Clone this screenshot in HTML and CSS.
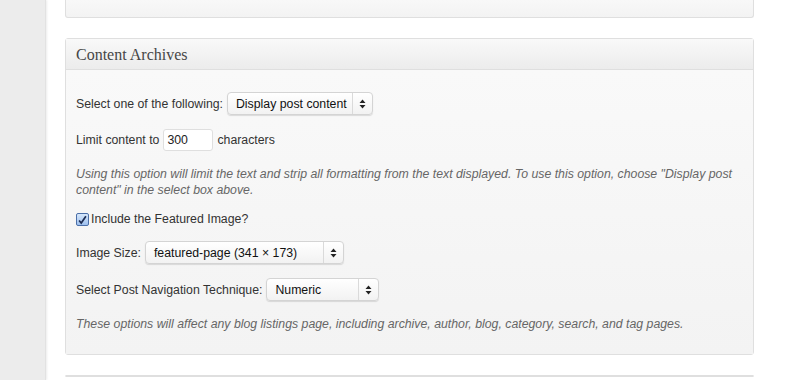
FILE: index.html
```html
<!DOCTYPE html>
<html lang="en">
  <head>
    <meta charset="UTF-8">
    <title>Theme Settings</title>
    <link rel="stylesheet" href="styles.css">
  </head>
  <body>
    <div class="sidebar"></div>
    <div class="main">
      <div class="postbox stub"></div>

      <div class="postbox">
        <h3 class="postbox-title">Content Archives</h3>
        <div class="inside">
          <div class="row">
            <label>Select one of the following:</label>
            <div class="select select-content">
              <span class="select-value">Display post content</span>
              <span class="select-arrows">
                <svg width="7" height="10" viewBox="0 0 7 10"><path d="M3.5 0.5 L6.5 4 L0.5 4 Z M3.5 9.5 L6.5 6 L0.5 6 Z" fill="#222"/></svg>
              </span>
            </div>
          </div>

          <div class="row">
            <label>Limit content to</label>
            <input class="text-input" type="text" value="300">
            <label>characters</label>
          </div>

          <p class="description">Using this option will limit the text and strip all formatting from the text displayed. To use this option, choose "Display post content" in the select box above.</p>

          <div class="row row-check">
            <span class="checkbox">
              <svg width="13" height="13" viewBox="0 0 13 13"><path d="M2.5 6.5 L5 9.5 L10.5 1.5" fill="none" stroke="#1d2c52" stroke-width="2"/></svg>
            </span>
            <label>Include the Featured Image?</label>
          </div>

          <div class="row">
            <label>Image Size:</label>
            <div class="select select-size">
              <span class="select-value">featured-page (341 × 173)</span>
              <span class="select-arrows">
                <svg width="7" height="10" viewBox="0 0 7 10"><path d="M3.5 0.5 L6.5 4 L0.5 4 Z M3.5 9.5 L6.5 6 L0.5 6 Z" fill="#222"/></svg>
              </span>
            </div>
          </div>

          <div class="row">
            <label>Select Post Navigation Technique:</label>
            <div class="select select-nav">
              <span class="select-value">Numeric</span>
              <span class="select-arrows">
                <svg width="7" height="10" viewBox="0 0 7 10"><path d="M3.5 0.5 L6.5 4 L0.5 4 Z M3.5 9.5 L6.5 6 L0.5 6 Z" fill="#222"/></svg>
              </span>
            </div>
          </div>

          <p class="description">These options will affect any blog listings page, including archive, author, blog, category, search, and tag pages.</p>
        </div>
      </div>

      <div class="postbox"></div>
    </div>
  </body>
</html>
```

FILE: styles.css
```css
* {
  box-sizing: border-box;
}

html,
body {
  height: 100%;
}

body {
  margin: 0;
  display: flex;
  overflow: hidden;
  background: #fff;
  font-family: "Liberation Sans", Arial, sans-serif;
  font-size: 12.3px;
  color: #333;
}

.sidebar {
  width: 46px;
  flex-shrink: 0;
  background: #ececec;
  border-right: 1px solid #e2e2e2;
  box-shadow: 1px 0 2px rgba(0, 0, 0, 0.08);
}

.main {
  width: 708px;
  padding-left: 19px;
}

.postbox {
  margin-bottom: 20px;
  border: 1px solid #dfdfdf;
  border-radius: 3px;
  background: #f5f5f5;
}

.postbox.stub {
  height: 18px;
  border-top: 0;
  border-radius: 0 0 3px 3px;
  background: linear-gradient(#f8f8f8, #f3f3f3);
}

.postbox-title {
  margin: 0;
  height: 31px;
  padding: 0 10px;
  line-height: 31px;
  font-family: "Liberation Serif", Georgia, serif;
  font-size: 16px;
  font-weight: normal;
  color: #464646;
  background: linear-gradient(#f9f9f9, #ececec);
  border-bottom: 1px solid #dfdfdf;
}

.inside {
  display: flex;
  flex-direction: column;
  gap: 14px;
  padding: 22px 10px 23px;
  background: linear-gradient(#f9f9f9, #f3f3f3);
}

.row {
  display: flex;
  align-items: center;
  gap: 4px;
  min-height: 16px;
}

.row-check {
  gap: 2px;
}

.description {
  margin: 1px 0 -1px;
  font-style: italic;
  line-height: 16px;
  color: #666;
}

.select {
  display: flex;
  align-items: center;
  height: 23px;
  border: 1px solid #d4d4d4;
  border-radius: 4px;
  background: linear-gradient(#fff, #f2f2f2);
  box-shadow: 0 1px 1px rgba(0, 0, 0, 0.12);
  color: #111;
}

.select-value {
  flex: 1;
  padding-left: 8px;
  white-space: nowrap;
}

.select-arrows {
  display: flex;
  align-items: center;
  justify-content: center;
  width: 20px;
  height: 100%;
  border-left: 1px solid #dadada;
}

.select-content {
  width: 146px;
}

.select-size {
  width: 199px;
}

.select-nav {
  width: 113px;
}

.text-input {
  width: 50px;
  height: 22px;
  padding: 0 3px;
  margin: 0;
  font-family: inherit;
  font-size: 12.3px;
  color: #222;
  background: #fff;
  border: 1px solid #dfdfdf;
  border-radius: 3px;
  outline: none;
}

.checkbox {
  display: flex;
  width: 13px;
  height: 13px;
  border: 1px solid #4b6fa8;
  border-radius: 2px;
  background: linear-gradient(#d6e7fb, #9ec0ee);
}
```
